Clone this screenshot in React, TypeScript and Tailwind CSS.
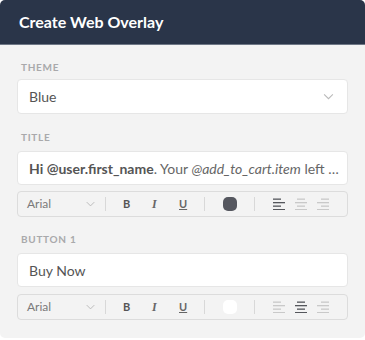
import React from "react";

const font = "font-['Lato','Noto_Sans',sans-serif]";

const Chevron = ({ className }: { className?: string }) => (
  <svg viewBox="0 0 12 8" className={className} fill="none" stroke="currentColor" strokeWidth="1.2">
    <path d="M1 1.5l5 5 5-5" />
  </svg>
);

const AlignIcon = ({ kind, active }: { kind: "left" | "center" | "right"; active: boolean }) => {
  const short = kind === "left" ? 0 : kind === "center" ? 2 : 4;
  return (
    <svg viewBox="0 0 12 12" className={`w-3 h-3 ${active ? "text-[#55575c]" : "text-[#c9c9c9]"}`}>
      <rect x={short} y="0.5" width="8" height="1.3" fill="currentColor" />
      <rect x="0" y="4" width="12" height="1.3" fill="currentColor" />
      <rect x={short} y="7.5" width="8" height="1.3" fill="currentColor" />
      <rect x="0" y="11" width="12" height="1.3" fill="currentColor" />
    </svg>
  );
};

const Toolbar = ({ color, align }: { color: string; align: "left" | "center" }) => (
  <div className="h-[26px] flex items-center rounded-[4px] border border-[#dcdcdc] bg-[#f3f3f3] text-[#777]">
    <div className="w-[87px] pl-[9px] pr-[10px] flex items-center justify-between">
      <span className="text-[12px] text-[#7a7a7a]">Arial</span>
      <Chevron className="w-[9px] h-[6px] text-[#b5b5b5]" />
    </div>
    <div className="w-px h-[14px] bg-[#d8d8d8]" />
    <div className="flex items-center">
      <span className="ml-[17px] w-[8px] text-[11px] font-bold text-[#555]">B</span>
      <span className="ml-[21px] w-[8px] text-[12px] italic font-['Liberation_Serif',serif] font-bold text-[#666]">I</span>
      <span className="ml-[19px] w-[8px] text-[11px] underline font-bold text-[#666]">U</span>
    </div>
    <div className="ml-[17px] w-px h-[14px] bg-[#d8d8d8]" />
    <div className={`ml-[18px] w-[14px] h-[14px] rounded-[5px] ${color}`} />
    <div className="ml-[17px] w-px h-[14px] bg-[#d8d8d8]" />
    <div className="ml-[18px] flex items-center gap-[10px]">
      <AlignIcon kind="left" active={align === "left"} />
      <AlignIcon kind="center" active={align === "center"} />
      <AlignIcon kind="right" active={false} />
    </div>
  </div>
);

const Label = ({ children, className }: { children: React.ReactNode; className?: string }) => (
  <div className={`h-[14px] leading-[14px] pl-[4px] text-[10px] font-bold tracking-[0.7px] text-[#a9a9ab] uppercase ${className}`}>
    {children}
  </div>
);

export default function App() {
  return (
    <div className={`w-[365px] h-[338px] bg-[#f3f3f3] rounded-[5px] overflow-hidden ${font}`}>
      <header className="h-[45px] bg-[#2a3549] border-b border-[#6e7786] flex items-center pl-[19px]">
        <h1 className="text-[16px] font-bold text-white">Create Web Overlay</h1>
      </header>
      <div className="px-[17px]">
        <Label className="mt-[15px] mb-[5px]">Theme</Label>
        <div className="h-[35px] bg-white border border-[#e6e6e6] rounded-[4px] flex items-center justify-between pl-[11px] pr-[13px]">
          <span className="text-[14px] text-[#555]">Blue</span>
          <Chevron className="w-[11px] h-[7px] text-[#b9b9b9]" />
        </div>

        <Label className="mt-[16px] mb-[7px]">Title</Label>
        <div className="h-[34px] bg-white border border-[#e6e6e6] rounded-[4px] flex items-center pl-[11px]">
          <span className="text-[14px] text-[#666] whitespace-nowrap">
            <b className="text-[#555]">Hi @user.first_name</b>. Your <i>@add_to_cart.item</i> left …
          </span>
        </div>
        <div className="mt-[6px]">
          <Toolbar color="bg-[#55575f]" align="left" />
        </div>

        <Label className="mt-[15px] mb-[7px]">Button 1</Label>
        <div className="h-[34px] bg-white border border-[#e6e6e6] rounded-[4px] flex items-center pl-[11px]">
          <span className="text-[14px] text-[#555]">Buy Now</span>
        </div>
        <div className="mt-[7px]">
          <Toolbar color="bg-white" align="center" />
        </div>
      </div>
    </div>
  );
}
